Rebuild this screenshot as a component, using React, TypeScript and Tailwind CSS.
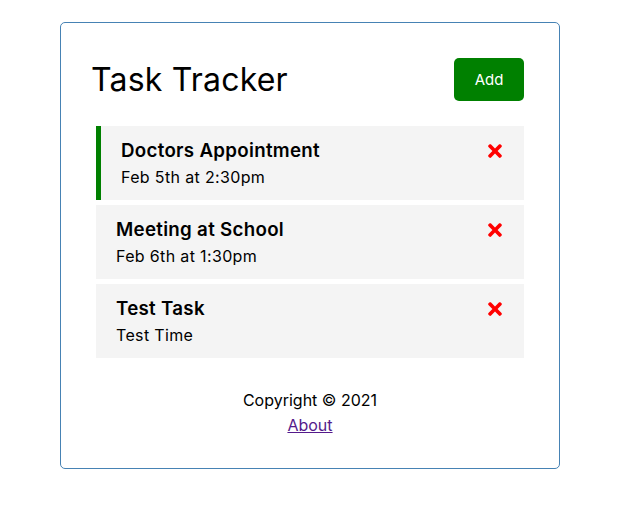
import React from "react";
import { FaTimes } from "react-icons/fa";

const tasks = [
  { id: 1, text: "Doctors Appointment", day: "Feb 5th at 2:30pm", reminder: true },
  { id: 2, text: "Meeting at School", day: "Feb 6th at 1:30pm", reminder: false },
  { id: 3, text: "Test Task", day: "Test Time", reminder: false },
];

export default function App() {
  return (
    <div className="min-h-[515px] bg-white text-black" style={{ fontFamily: "Inter, 'Open Sans', sans-serif" }}>
      <div className="ml-[60px] mt-[22px] w-[500px] rounded-[5px] border border-[#4682b4] p-[30px]">
        <header className="mb-[20px] flex items-center justify-between">
          <h1 className="text-[32px] font-normal leading-[48px] tracking-[0.2px]">Task Tracker</h1>
          <button className="m-[5px] h-[43px] w-[70px] rounded-[5px] bg-[#008000] pt-[2px] text-[15px] text-white">
            Add
          </button>
        </header>
        <div className="flex flex-col gap-[5px] px-[5px]">
          {tasks.map((t) => (
            <div
              key={t.id}
              className={
                t.reminder
                  ? "border-l-[5px] border-[#008000] bg-[#f4f4f4] px-[20px] py-[10px]"
                  : "bg-[#f4f4f4] px-[20px] py-[10px]"
              }
            >
              <h3 className="flex h-[28px] items-center justify-between text-[18.72px] font-semibold leading-[28px] tracking-[0.3px]">
                <span className="pt-[2px]">{t.text}</span>
                <FaTimes size={20} color="red" className="mr-[-1px] mt-[2px]" />
              </h3>
              <p className="text-[16px] leading-[26px] tracking-[0.35px]">{t.day}</p>
            </div>
          ))}
        </div>
        <footer className="mt-[30px] flex flex-col items-center text-[16px] leading-[25px]">
          <p>Copyright © 2021</p>
          <a href="#" className="text-[#551a8b] underline">
            About
          </a>
        </footer>
      </div>
    </div>
  );
}
